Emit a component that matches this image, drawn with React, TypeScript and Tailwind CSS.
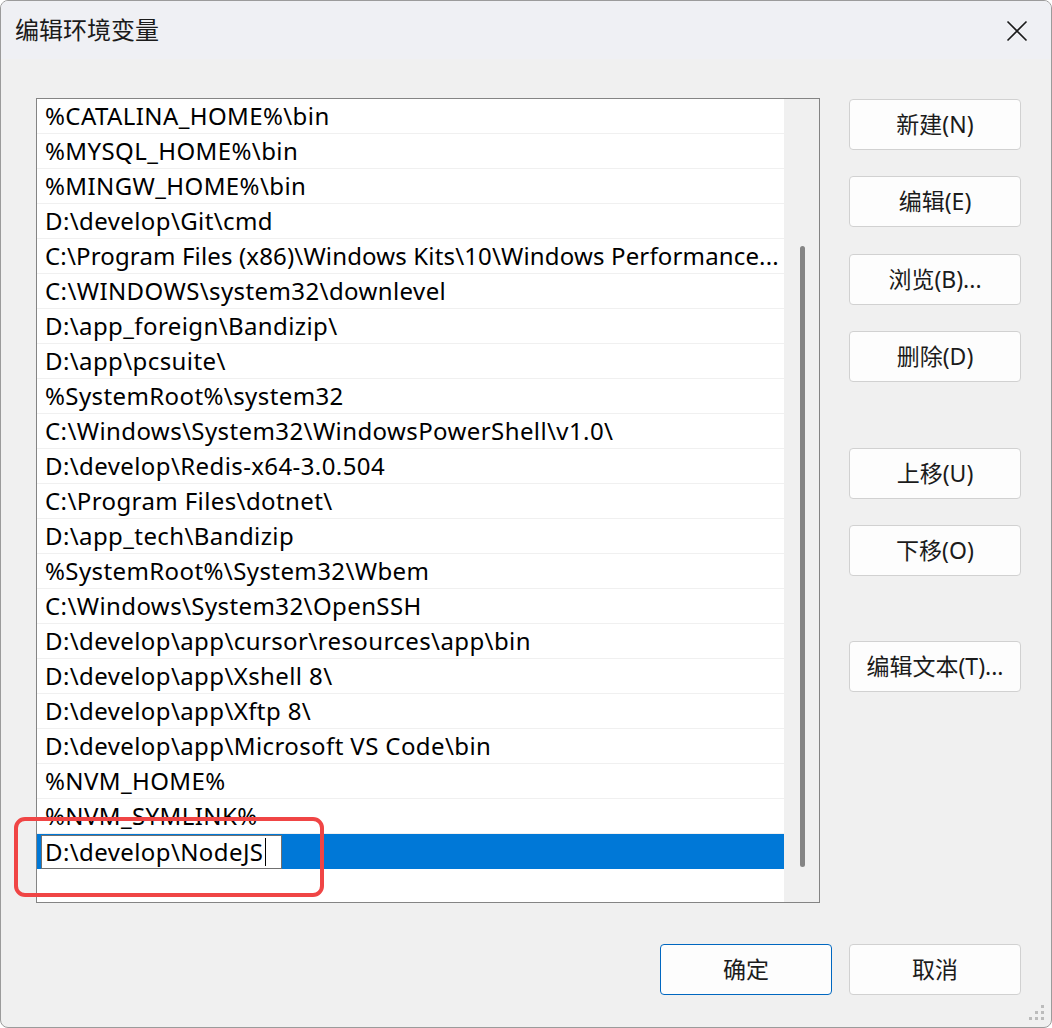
import React from "react";

const paths = [
  "%CATALINA_HOME%\\bin",
  "%MYSQL_HOME%\\bin",
  "%MINGW_HOME%\\bin",
  "D:\\develop\\Git\\cmd",
  "C:\\Program Files (x86)\\Windows Kits\\10\\Windows Performance...",
  "C:\\WINDOWS\\system32\\downlevel",
  "D:\\app_foreign\\Bandizip\\",
  "D:\\app\\pcsuite\\",
  "%SystemRoot%\\system32",
  "C:\\Windows\\System32\\WindowsPowerShell\\v1.0\\",
  "D:\\develop\\Redis-x64-3.0.504",
  "C:\\Program Files\\dotnet\\",
  "D:\\app_tech\\Bandizip",
  "%SystemRoot%\\System32\\Wbem",
  "C:\\Windows\\System32\\OpenSSH",
  "D:\\develop\\app\\cursor\\resources\\app\\bin",
  "D:\\develop\\app\\Xshell 8\\",
  "D:\\develop\\app\\Xftp 8\\",
  "D:\\develop\\app\\Microsoft VS Code\\bin",
  "%NVM_HOME%",
  "%NVM_SYMLINK%",
];

const font = {
  fontFamily: '"Noto Sans", "Noto Sans CJK SC", sans-serif',
};

function DlgButton({
  label,
  primary = false,
  className = "",
}: {
  label: string;
  primary?: boolean;
  className?: string;
}) {
  return (
    <button
      className={`flex h-[51px] w-[172px] items-center justify-center rounded-[4px] border bg-[#fdfdfd] text-[23px] leading-normal text-[#1b1b1b] ${
        primary ? "border-[#0067c0]" : "border-[#d1d1d1]"
      } ${className}`}
    >
      {label}
    </button>
  );
}

export default function App() {
  return (
    <div
      style={font}
      className="relative flex h-[1028px] w-[1052px] flex-col overflow-hidden rounded-[8px] border border-[#9b9b9b] bg-[#f0f0f0]"
    >
      {/* title bar */}
      <div className="flex h-[58px] shrink-0 items-center justify-between bg-[#eff0f4] pl-[14px] pr-[23px]">
        <span className="text-[24px] leading-normal text-[#1b1b1b]">编辑环境变量</span>
        <svg width="22" height="22" viewBox="0 0 22 22" className="mt-[1px]">
          <path
            d="M1.5 1.5 L20.5 20.5 M20.5 1.5 L1.5 20.5"
            stroke="#1b1b1b"
            strokeWidth="1.6"
            fill="none"
          />
        </svg>
      </div>

      <div className="flex flex-1 flex-col">
        <div className="mt-[39px] flex pl-[35px]">
          {/* list */}
          <div className="flex h-[805px] w-[784px] border border-[#848484] bg-white">
            <div className="flex w-[747px] flex-col">
              {paths.map((p) => (
                <div
                  key={p}
                  className="flex h-[35px] shrink-0 items-center border-b border-[#f0f0f0] pl-[8px]"
                >
                  <span
                    className={`whitespace-nowrap text-[24px] leading-[34px] text-black ${
                      p.endsWith("...") ? "tracking-[0.15px]" : "tracking-[0.4px]"
                    }`}
                  >
                    {p}
                  </span>
                </div>
              ))}
              <div className="flex h-[35px] shrink-0 items-center bg-[#0078d7] pl-[4px]">
                <div className="flex h-[34px] w-[241px] items-center border border-[#707070] bg-white pl-[3px]">
                  <span className="whitespace-nowrap text-[24px] leading-[32px] tracking-[0.4px] text-black">
                    D:\develop\NodeJS
                  </span>
                  <span className="ml-[2px] h-[28px] w-[1px] bg-black" />
                </div>
              </div>
            </div>
            {/* scroll track */}
            <div className="flex w-[35px] justify-center bg-[#f0f0f0] pl-[1px] pt-[147px]">
              <div className="h-[621px] w-[5px] rounded-full bg-[#858585]" />
            </div>
          </div>

          {/* side buttons */}
          <div className="ml-[29px] flex flex-col pt-[1px]">
            <DlgButton label="新建(N)" />
            <DlgButton label="编辑(E)" className="mt-[26px]" />
            <DlgButton label="浏览(B)..." className="mt-[27px]" />
            <DlgButton label="删除(D)" className="mt-[26px]" />
            <DlgButton label="上移(U)" className="mt-[66px]" />
            <DlgButton label="下移(O)" className="mt-[26px]" />
            <DlgButton label="编辑文本(T)..." className="mt-[65px]" />
          </div>
        </div>

        <div className="mt-[41px] flex justify-end gap-[17px] pr-[30px]">
          <DlgButton label="确定" primary />
          <DlgButton label="取消" />
        </div>
      </div>

      {/* resize grip */}
      <svg
        width="18"
        height="18"
        viewBox="0 0 18 18"
        className="absolute bottom-[4px] right-[4px]"
      >
        <g fill="#bcbcbc">
          <rect x="12" y="0" width="3" height="3" />
          <rect x="6" y="6" width="3" height="3" />
          <rect x="12" y="6" width="3" height="3" />
          <rect x="0" y="12" width="3" height="3" />
          <rect x="6" y="12" width="3" height="3" />
          <rect x="12" y="12" width="3" height="3" />
        </g>
      </svg>

      {/* red annotation */}
      <div className="pointer-events-none absolute left-[13px] top-[816px] h-[80px] w-[310px] rounded-[11px] border-[4px] border-[#f04545]" />
    </div>
  );
}
